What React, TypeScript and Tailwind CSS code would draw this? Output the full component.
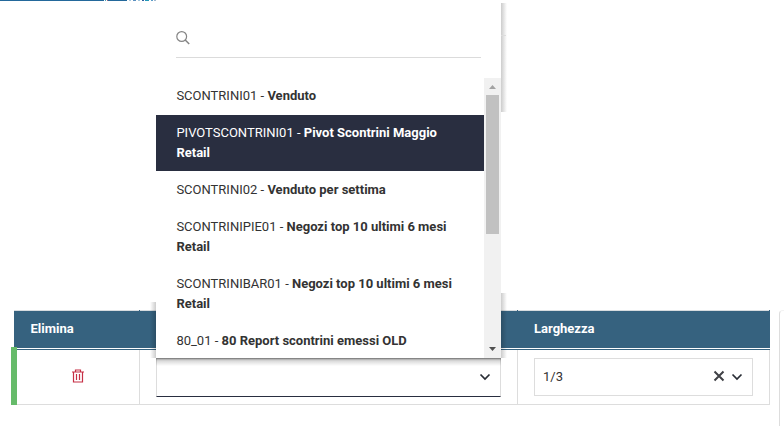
import React from "react";

const options = [
  { code: "SCONTRINI01", label: "Venduto" },
  { code: "PIVOTSCONTRINI01", label: "Pivot Scontrini Maggio Retail", active: true },
  { code: "SCONTRINI02", label: "Venduto per settima" },
  { code: "SCONTRINIPIE01", label: "Negozi top 10 ultimi 6 mesi Retail" },
  { code: "SCONTRINIBAR01", label: "Negozi top 10 ultimi 6 mesi Retail" },
  { code: "80_01", label: "80 Report scontrini emessi OLD" },
];

function Chevron() {
  return (
    <svg width="12" height="8" viewBox="0 0 12 8" fill="none" stroke="#292d35" strokeWidth="1.7">
      <path d="M1.5 1.5 6 6l4.500-4.500" />
    </svg>
  );
}

function TopStrip() {
  return (
    <div className="flex h-px w-[160px]">
      <div className="w-[104px] bg-[#23689b]" />
      <div className="ml-px w-px bg-[#48a8b8]" />
      <div className="ml-px w-px bg-[#a06a86]" />
      <div className="w-[19px] bg-[#23689b]" />
      <div className="ml-[2px] w-[2px] bg-[#a9cbe0]" />
      <div className="ml-[2px] w-[3px] bg-[#5a8fc0]" />
      <div className="ml-[2px] w-[2px] bg-[#9fc4da]" />
      <div className="ml-[2px] w-[2px] bg-[#2f5fa0]" />
      <div className="ml-px w-[4px] bg-[#2398b9]" />
      <div className="ml-[2px] w-[2px] bg-[#5a9cc8]" />
      <div className="ml-px w-[3px] bg-[#a3b9d0]" />
    </div>
  );
}

function Menu() {
  return (
    <div className="absolute left-[156px] top-0 z-10 h-[358px] w-[345px] rounded-tr bg-white">
      <div className="absolute left-full top-[3px] h-[109px] w-[6px] bg-linear-to-r from-[#cccccc] to-white" />
      <div className="absolute left-full top-[35px] h-px w-[5px] bg-[#dddddd]" />
      <div className="absolute left-full top-[293px] h-[65px] w-[6px] bg-linear-to-r from-black/20 to-transparent" />
      <div className="absolute right-full top-[302px] h-[56px] w-[6px] bg-linear-to-l from-black/20 to-transparent" />
      <div className="absolute left-0 top-full h-[8px] w-full bg-linear-to-b from-black/45 via-black/15 via-35% to-transparent" />
      <div className="relative flex h-full flex-col">
        <div className="mx-5 flex h-[58px] w-[305px] items-end border-b border-[#dbdbdb] pb-[12px]">
          <svg width="14" height="14" viewBox="0 0 14 14" fill="none" stroke="#858585" strokeWidth="1.200">
            <circle cx="5.700" cy="5.500" r="4.900" />
            <path d="m9.200 9 4 4" strokeWidth="1.500" />
          </svg>
        </div>
        <div className="mt-5 flex h-[280px] overflow-hidden">
          <ul className="w-[328px]">
            {options.map((o) => (
              <li
                key={o.code}
                className={`mb-px py-2 pl-[20.4px] pr-6 leading-5 ${o.active ? "bg-[#292e40] text-white" : "text-[#333333]"}`}
              >
                {o.code} - <b className="font-bold">{o.label}</b>
              </li>
            ))}
          </ul>
          <div className="flex w-[17px] flex-col items-center bg-[#f1f1f1]">
            <svg className="h-[17px] w-[17px]" viewBox="0 0 17 17" fill="#a3a3a3">
              <path d="M5 11h7L8.500 7z" />
            </svg>
            <div className="h-[139px] w-[13px] bg-[#c1c1c1]" />
            <svg className="mt-auto h-[17px] w-[17px]" viewBox="0 0 17 17" fill="#505050">
              <path d="M5 6h7l-3.500 4z" />
            </svg>
          </div>
        </div>
      </div>
    </div>
  );
}

export default function App() {
  return (
    <div className="relative h-[426px] w-[784px] overflow-hidden bg-white font-['Roboto',sans-serif] text-[13px] text-[#333333]">
      <TopStrip />
      <Menu />
      <div className="mt-[309px] flex">
        <div className="ml-[11px] w-[759px] shrink-0">
          <div className="ml-[3px] flex h-[38px] border-t border-[#d8dcdf] bg-[#36627f] bg-clip-padding font-bold text-white">
            <div className="-mt-px w-[126px] border-r border-[#36627f] pl-[16.500px] pt-px leading-[35px]">Elimina</div>
            <div className="-mt-px w-[378px] border-r border-[#36627f]" />
            <div className="-mt-px grow border-r border-[#36627f] pl-4 pt-px leading-[35px]">Larghezza</div>
          </div>
          <div className="relative ml-[3px] h-[2px] border-b border-[#36627f]">
            <div className="absolute -left-[3px] -top-px h-[3px] w-[6px] bg-[#66bb6a]" />
          </div>
          <div className="flex h-[55px] border-b border-r border-[#dddddd]">
            <div className="h-[55px] w-[6px] shrink-0 bg-[#66bb6a]" />
            <div className="flex w-[123px] shrink-0 items-center justify-center border-r border-[#dddddd] pb-0.5">
              <svg width="12" height="14" viewBox="0 0 12 14" fill="none" stroke="#c62f45" strokeWidth="1.200">
                <path d="M0 3h12M3.500 2.500V1h5v1.500M1.500 3v10h9V3M4.500 5v6M7.500 5v6" />
              </svg>
            </div>
            <div className="w-[378px] shrink-0 border-r border-[#dddddd] pl-4 pt-2">
              <div className="flex h-[39px] w-[345px] items-center justify-end border border-[#dddddd] border-b-[#292e40] pb-0.5 pr-[9px]">
                <Chevron />
              </div>
            </div>
            <div className="pl-4 pt-2">
              <div className="flex h-[38px] w-[219px] items-center border border-[#dddddd] pl-2 pr-[9px]">
                <span className="grow">1/3</span>
                <svg className="mb-0.5 mr-[6px]" width="12" height="12" viewBox="0 0 12 12" stroke="#3f4045" strokeWidth="2">
                  <path d="m1.500 1.500 9 9M10.500 1.500l-9 9" />
                </svg>
                <Chevron />
              </div>
            </div>
          </div>
        </div>
        <div className="ml-[9px] h-[120px] w-[10px] shrink-0 rounded-tl border-l border-t border-[#dddddd] border-t-[#f3f3f3]" />
      </div>
    </div>
  );
}
